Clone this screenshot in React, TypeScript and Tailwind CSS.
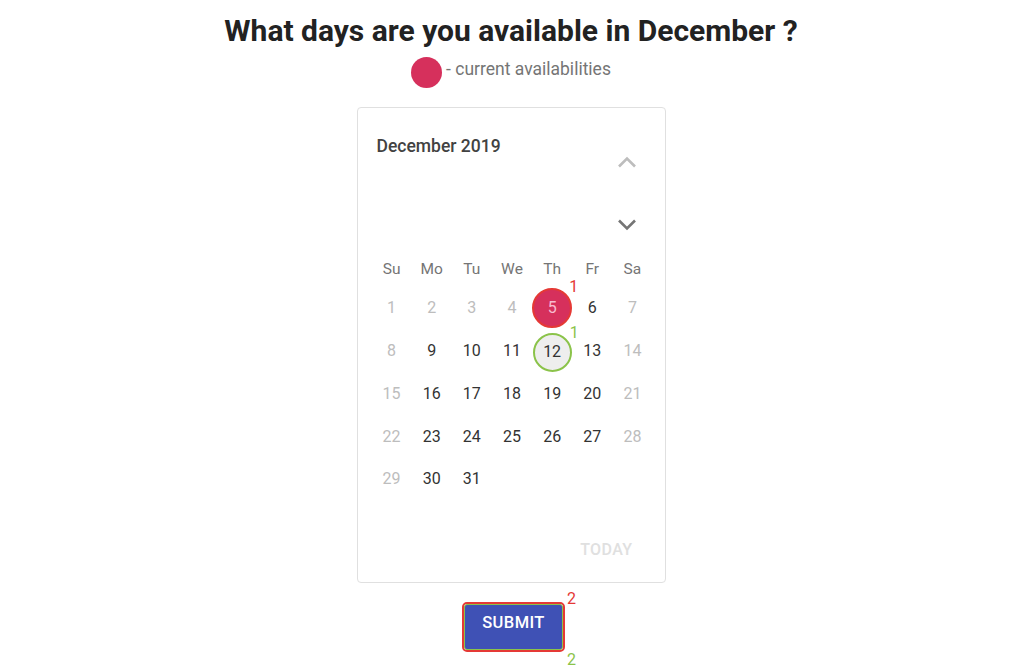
import React from 'react';

const weekDays = ['Su', 'Mo', 'Tu', 'We', 'Th', 'Fr', 'Sa'];

// December 2019 starts on a Sunday
const days = Array.from({ length: 31 }, (_, i) => i + 1);

const isDisabled = (day: number) => {
  const col = (day - 1) % 7;
  return day < 5 || col === 0 || col === 6;
};

const Chevron: React.FC<{ up?: boolean; color: string }> = ({ up, color }) => (
  <svg width="20" height="12" viewBox="0 0 20 12" fill="none">
    <path
      d={up ? 'M2 10.5 L10 2.5 L18 10.5' : 'M2 1.5 L10 9.5 L18 1.5'}
      stroke={color}
      strokeWidth="2.6"
      strokeLinecap="butt"
      strokeLinejoin="miter"
    />
  </svg>
);

const DayCell: React.FC<{ day: number }> = ({ day }) => {
  if (day === 5) {
    return (
      <div className="relative flex h-[40px] w-[40px] items-center justify-center rounded-full border-2 border-[#e53935] bg-[#d6305c] text-[#f8bbd0]">
        5
        <span className="absolute left-[35px] top-[-11px] text-[16px] leading-[16px] text-[#e53935]">1</span>
      </div>
    );
  }
  if (day === 12) {
    return (
      <div className="relative mt-[2px] flex h-[39px] w-[39px] items-center justify-center rounded-full border-2 border-[#8bc34a] bg-[#eeeeee] text-[#333333]">
        12
        <span className="absolute left-[35px] top-[-10px] text-[16px] leading-[16px] text-[#8bc34a]">1</span>
      </div>
    );
  }
  return <span className={isDisabled(day) ? 'text-[#bdbdbd]' : 'text-[#333333]'}>{day}</span>;
};

const App: React.FC = () => {
  return (
    <div className="flex min-h-screen flex-col items-center bg-white pr-[7px] font-['Roboto','Liberation_Sans',sans-serif]">
      <h1 className="mt-[13px] text-[30px] font-bold leading-[36px] text-[#222222]">
        What days are you available in December ?
      </h1>

      <div className="mt-[8px] flex items-start">
        <div className="h-[31px] w-[31px] rounded-full bg-[#d6305c]" />
        <span className="ml-[4px] mt-[2px] text-[17.5px] leading-[20px] text-[#757575]">- current availabilities</span>
      </div>

      {/* Calendar card */}
      <div className="mt-[19px] w-[309px] rounded-[4px] border border-[#e0e0e0] bg-white">
        <div className="flex items-start justify-between pl-[19px] pr-[14px]">
          <div className="mt-[28px] text-[17.5px] font-medium leading-[20px] text-[#424242]">December 2019</div>
          <div className="mt-[30px] flex w-[48px] flex-col items-center gap-[15px]">
            <div className="flex h-[48px] w-[48px] items-center justify-center">
              <Chevron up color="#bdbdbd" />
            </div>
            <div className="flex h-[48px] w-[48px] items-center justify-center">
              <Chevron color="#757575" />
            </div>
          </div>
        </div>

        <div className="ml-[14px] mt-[4px] grid w-[281px] grid-cols-7">
          {weekDays.map((d) => (
            <div key={d} className="flex h-[34px] items-center justify-center text-[15.5px] text-[#757575]">
              {d}
            </div>
          ))}
        </div>

        <div className="ml-[14px] grid w-[281px] grid-cols-7">
          {days.map((day) => (
            <div key={day} className="flex h-[42.75px] items-center justify-center text-[16px]">
              <DayCell day={day} />
            </div>
          ))}
        </div>

        <div className="mt-[39px] flex justify-end pb-[22px] pr-[32px]">
          <span className="text-[16px] font-medium uppercase leading-[20px] tracking-[0.4px] text-[#e0e0e0]">Today</span>
        </div>
      </div>

      {/* Submit */}
      <div className="relative ml-[5px] mt-[19px] h-[50px] w-[103px] rounded-[5px] border-2 border-[#e53935]">
        <button className="flex h-full w-full items-center justify-center rounded-[3px] border border-[#8bc34a] bg-[#3f51b5] pb-[6px] text-[16.5px] font-medium tracking-[0.4px] text-white">
          SUBMIT
        </button>
        <span className="absolute left-[103px] top-[-13px] text-[16px] leading-[16px] text-[#e53935]">2</span>
        <span className="absolute left-[103px] top-[48px] text-[16px] leading-[16px] text-[#8bc34a]">2</span>
      </div>
    </div>
  );
};

export default App;
